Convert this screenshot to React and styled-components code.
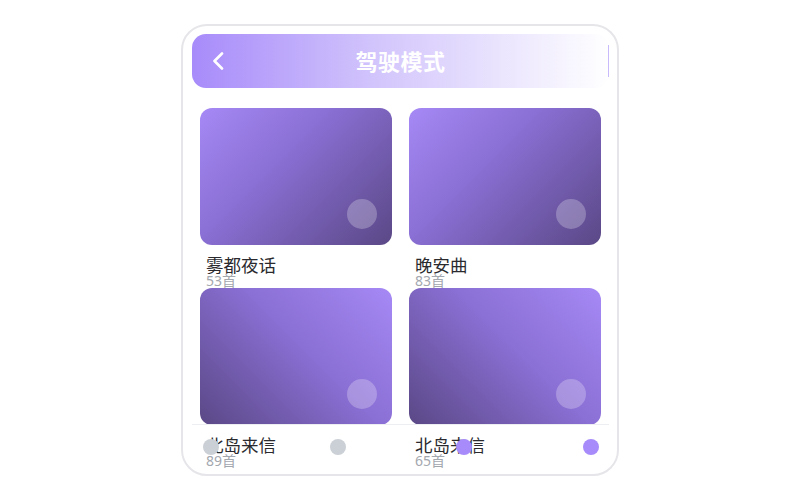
import React from 'react';
import styled, { createGlobalStyle } from 'styled-components';

const GlobalStyle = createGlobalStyle`
  html, body {
    margin: 0;
    padding: 0;
    background: #ffffff;
    font-family: "Noto Sans", "Noto Sans CJK SC", sans-serif;
  }
  * {
    box-sizing: border-box;
  }
`;

const playlists = [
  { title: '雾都夜话', count: 53, flip: false },
  { title: '晚安曲', count: 83, flip: false },
  { title: '北岛来信', count: 89, flip: true },
  { title: '北岛来信', count: 65, flip: true },
];

const dots = [false, false, true, true];

function App() {
  return (
    <>
      <GlobalStyle />
      <Page>
        <Phone>
          <Header>
            <BackButton>
              <svg width="12" height="18" viewBox="0 0 12 18" fill="none">
                <path d="M10 1.5 L2.5 9 L10 16.5" stroke="#ffffff" strokeWidth="2.6" strokeLinecap="round" strokeLinejoin="round" />
              </svg>
            </BackButton>
            <Title>驾驶模式</Title>
            <HeaderEnd />
          </Header>
          <Grid>
            {playlists.map((item, i) => (
              <Item key={i}>
                <Cover $flip={item.flip}>
                  <PlayDot />
                </Cover>
                <ItemTitle>{item.title}</ItemTitle>
                <ItemCount>{item.count}首</ItemCount>
              </Item>
            ))}
          </Grid>
          <BottomBar>
            {dots.map((active, i) => (
              <Dot key={i} $active={active} />
            ))}
          </BottomBar>
        </Phone>
      </Page>
    </>
  );
}

const Page = styled.div`
  width: 800px;
  height: 500px;
  display: flex;
  align-items: center;
  justify-content: center;
`;

const Phone = styled.div`
  position: relative;
  width: 438px;
  height: 452px;
  border: 2px solid #e6e6ea;
  border-radius: 26px;
  padding: 8px 8px 0 9px;
  overflow: hidden;
  display: flex;
  flex-direction: column;
  background: #ffffff;
`;

const Header = styled.div`
  height: 54px;
  flex-shrink: 0;
  border-radius: 14px;
  background: linear-gradient(90deg, #a78bfa 0%, #d3c6fc 45%, #ffffff 100%);
  display: flex;
  align-items: center;
`;

const BackButton = styled.div`
  width: 48px;
  height: 100%;
  display: flex;
  align-items: center;
  padding-left: 20px;
  cursor: pointer;
`;

const Title = styled.div`
  flex: 1;
  text-align: center;
  color: #ffffff;
  font-size: 22px;
  line-height: 30px;
  padding-bottom: 3px;
  font-weight: 700;
  letter-spacing: 0.5px;
  font-family: "Noto Sans CJK SC", sans-serif;
`;

const HeaderEnd = styled.div`
  width: 48px;
  height: 32px;
  border-right: 1px solid #c9bbfb;
`;

const Grid = styled.div`
  margin-top: 20px;
  padding: 0 8px;
  display: grid;
  grid-template-columns: 192px 192px;
  grid-auto-rows: 180px;
  column-gap: 17px;
`;

const Item = styled.div`
  display: flex;
  flex-direction: column;
`;

const Cover = styled.div`
  position: relative;
  height: 137px;
  flex-shrink: 0;
  border-radius: 12px;
  background: ${({ $flip }) =>
    $flip
      ? 'linear-gradient(225deg, #a689f5 0%, #8a6fd4 45%, #5a4886 100%)'
      : 'linear-gradient(135deg, #a689f5 0%, #8a6fd4 40%, #5a4886 100%)'};
`;

const PlayDot = styled.div`
  position: absolute;
  right: 15px;
  bottom: 16px;
  width: 30px;
  height: 30px;
  border-radius: 50%;
  background: rgba(255, 255, 255, 0.25);
`;

const ItemTitle = styled.div`
  margin-top: 11px;
  padding-left: 6px;
  font-size: 17.5px;
  line-height: 18px;
  color: #2a2a2e;
  font-family: "Noto Sans CJK SC", sans-serif;
`;

const ItemCount = styled.div`
  margin-top: -1px;
  padding-left: 6px;
  font-size: 14px;
  line-height: 15px;
  color: #a3a7ae;
  font-family: "Noto Sans", "Noto Sans CJK SC", sans-serif;
`;

const BottomBar = styled.div`
  position: absolute;
  left: 9px;
  right: 8px;
  bottom: 0;
  height: 50px;
  border-top: 1px solid #eceef2;
  display: flex;
  align-items: center;
  justify-content: space-between;
  padding: 0 10px 6px 11px;
`;

const Dot = styled.div`
  width: 16px;
  height: 16px;
  border-radius: 50%;
  background: ${({ $active }) => ($active ? '#a78bfa' : '#cbd0d6')};
`;

export default App;
